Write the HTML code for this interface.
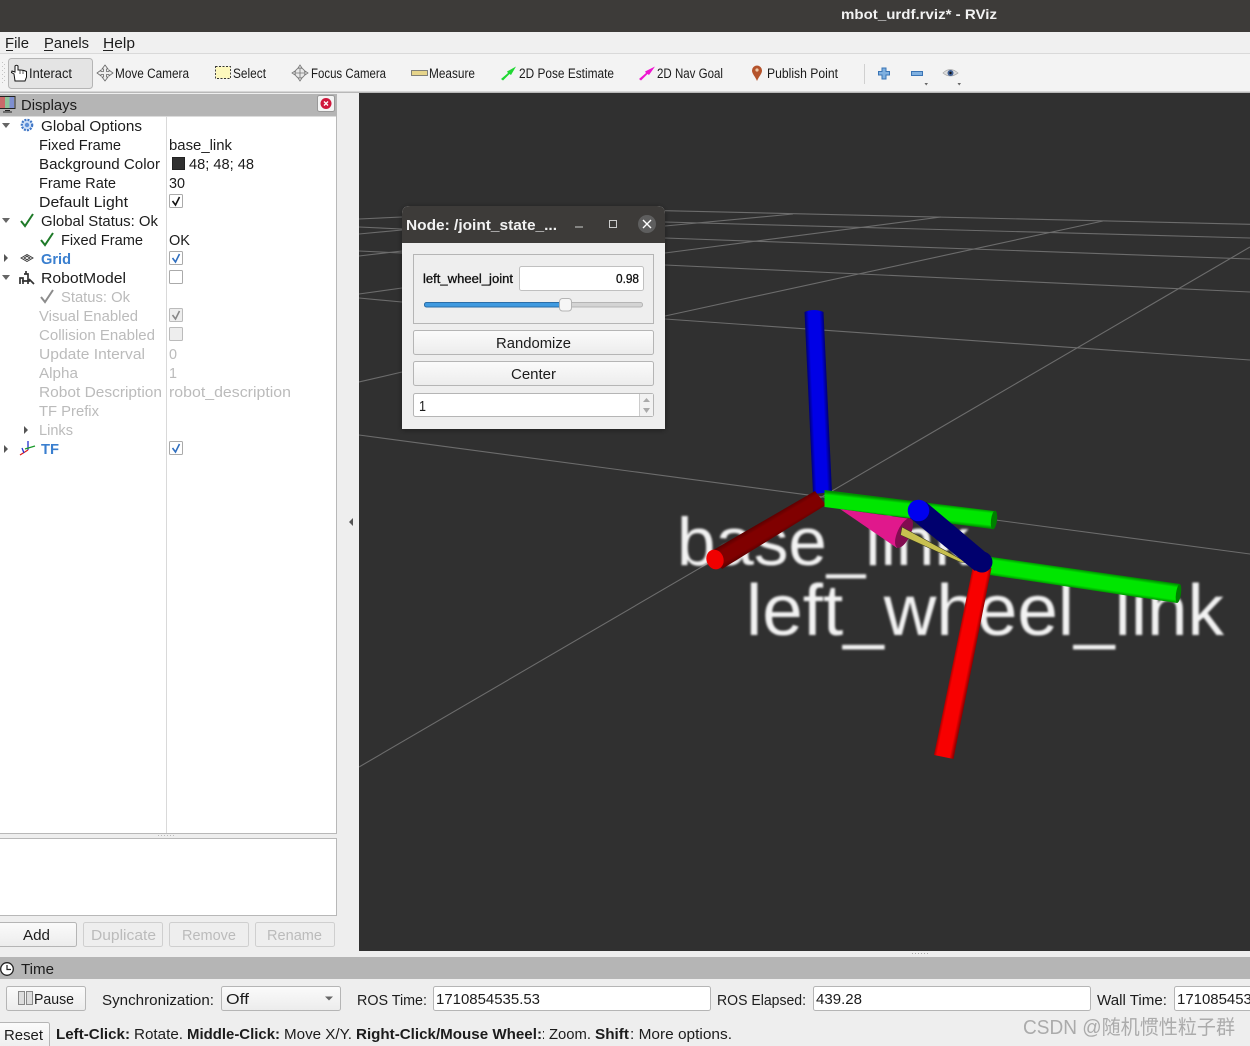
<!DOCTYPE html>
<html><head><meta charset="utf-8"><title>RViz</title>
<style>
html,body{margin:0;padding:0;background:#eee;width:1250px;height:1046px;overflow:hidden}
svg{display:block;font-family:"Liberation Sans","Noto Sans CJK SC",sans-serif}
text{font-size:15px;fill:#1c1c1c;white-space:pre}
.t{font-size:13.5px}
.d{fill:#bbb}
.b{font-weight:bold;fill:#3a7fcf}
.s{font-weight:bold}
.g line{stroke:#6c6c6c;stroke-width:1.1}
</style></head><body>
<svg xmlns="http://www.w3.org/2000/svg" width="1250" height="1046" viewBox="0 0 1250 1046">
<defs>
<linearGradient id="btn" x1="0" y1="0" x2="0" y2="1"><stop offset="0" stop-color="#fbfbfb"/><stop offset="1" stop-color="#ececec"/></linearGradient>
<linearGradient id="cb" gradientUnits="userSpaceOnUse" x1="809" y1="400.4" x2="827" y2="399.6"><stop offset="0" stop-color="#000080"/><stop offset=".2" stop-color="#0000e6"/><stop offset=".8" stop-color="#0000e6"/><stop offset="1" stop-color="#000080"/></linearGradient>
<linearGradient id="cr" gradientUnits="userSpaceOnUse" x1="952.2" y1="662" x2="971.8" y2="666"><stop offset="0" stop-color="#900000"/><stop offset=".18" stop-color="#f80000"/><stop offset=".82" stop-color="#f80000"/><stop offset="1" stop-color="#900000"/></linearGradient>
<linearGradient id="cg1" gradientUnits="userSpaceOnUse" x1="910" y1="501" x2="908" y2="519"><stop offset="0" stop-color="#008c00"/><stop offset=".18" stop-color="#00e600"/><stop offset=".82" stop-color="#00e600"/><stop offset="1" stop-color="#008c00"/></linearGradient>
<linearGradient id="cg2" gradientUnits="userSpaceOnUse" x1="1086.4" y1="570.6" x2="1083.6" y2="589.4"><stop offset="0" stop-color="#008c00"/><stop offset=".18" stop-color="#00e600"/><stop offset=".82" stop-color="#00e600"/><stop offset="1" stop-color="#008c00"/></linearGradient>
<linearGradient id="cd" gradientUnits="userSpaceOnUse" x1="762.4" y1="520.5" x2="773.6" y2="539.5"><stop offset="0" stop-color="#560000"/><stop offset=".25" stop-color="#800000"/><stop offset=".75" stop-color="#800000"/><stop offset="1" stop-color="#560000"/></linearGradient>
<filter id="bl" x="-5%" y="-10%" width="110%" height="120%"><feGaussianBlur stdDeviation="1"/></filter>
<filter id="sh" x="-10%" y="-10%" width="120%" height="120%"><feDropShadow dx="0" dy="1" stdDeviation="3" flood-color="#000" flood-opacity=".4"/></filter>
</defs>

<rect width="1250" height="1046" fill="#eeeeee"/>
<!-- title bar -->
<rect width="1250" height="32" fill="#3d3b39"/>
<text x="841" y="19" textLength="156" lengthAdjust="spacingAndGlyphs" style="font-weight:bold;fill:#f2f2f2;font-size:14px">mbot_urdf.rviz* - RViz</text>
<!-- menu -->
<rect y="32" width="1250" height="21" fill="#f0f0f0"/>
<rect y="53" width="1250" height="1" fill="#d9d9d9"/>
<text x="5" y="48" textLength="24" lengthAdjust="spacingAndGlyphs">File</text><rect x="6" y="50" width="7" height="1" fill="#222"/>
<text x="44" y="48" textLength="45" lengthAdjust="spacingAndGlyphs">Panels</text><rect x="44" y="50" width="9" height="1" fill="#222"/>
<text x="103" y="48" textLength="32" lengthAdjust="spacingAndGlyphs">Help</text><rect x="103" y="50" width="10" height="1" fill="#222"/>
<!-- toolbar -->
<rect y="54" width="1250" height="38" fill="#f3f3f3"/>
<rect y="91.5" width="1250" height="1.5" fill="#b8b8b8"/>
<g fill="#c4c4c4"><rect x="2" y="62" width="1" height="1"/><rect x="2" y="66" width="1" height="1"/><rect x="2" y="70" width="1" height="1"/><rect x="2" y="74" width="1" height="1"/><rect x="2" y="78" width="1" height="1"/><rect x="2" y="82" width="1" height="1"/><rect x="4" y="64" width="1" height="1"/><rect x="4" y="68" width="1" height="1"/><rect x="4" y="72" width="1" height="1"/><rect x="4" y="76" width="1" height="1"/><rect x="4" y="80" width="1" height="1"/></g>
<rect x="8.5" y="58.5" width="84" height="30" rx="3" fill="#e4e4e4" stroke="#b5b5b5"/>
<path d="M15 81 L14 74 L11.5 72.5 L12 71 L15 72 L15 66 Q16.5 64.5 18 66 L18 70 L21 70 L24 70.5 L26.5 71.5 L26.5 77 L25 81 Z" fill="#fff" stroke="#111" stroke-width="1"/>
<path d="M20 70.5 V74 M23 70.5 V74" stroke="#111" stroke-width=".7"/>
<text class="t" x="29" y="78" textLength="43" lengthAdjust="spacingAndGlyphs">Interact</text>
<g fill="#eee" stroke="#666" stroke-width=".8"><path d="M105 65 L108 69 L106.5 69 L106.5 71.5 L109 71.5 L109 70 L113 73 L109 76 L109 74.5 L106.5 74.5 L106.5 77 L108 77 L105 81 L102 77 L103.5 77 L103.5 74.5 L101 74.5 L101 76 L97 73 L101 70 L101 71.5 L103.5 71.5 L103.5 69 L102 69 Z"/></g>
<text class="t" x="115" y="78" textLength="74" lengthAdjust="spacingAndGlyphs">Move Camera</text>
<rect x="215.5" y="66.5" width="15" height="12" fill="#fdf8bd" stroke="#333" stroke-dasharray="2 1.5" stroke-width=".9"/>
<text class="t" x="233" y="78" textLength="33" lengthAdjust="spacingAndGlyphs">Select</text>
<g fill="#e8e8e8" stroke="#777" stroke-width=".8"><circle cx="300" cy="73" r="5"/><path d="M300 65 L302 68 L298 68 Z M300 81 L302 78 L298 78 Z M292 73 L295 71 L295 75 Z M308 73 L305 71 L305 75 Z"/><path d="M300 68 V78 M295 73 H305" fill="none"/></g>
<text class="t" x="311" y="78" textLength="75" lengthAdjust="spacingAndGlyphs">Focus Camera</text>
<rect x="411.5" y="70.5" width="16" height="5" fill="#e6d48a" stroke="#666" stroke-width=".8"/>
<text class="t" x="429" y="78" textLength="46" lengthAdjust="spacingAndGlyphs">Measure</text>
<path d="M501 79 L508 73 L507 71.5 L516 66.5 L511 75 L509.5 74 L503 80.5 Z" fill="#1fd832"/>
<text class="t" x="519" y="78" textLength="95" lengthAdjust="spacingAndGlyphs">2D Pose Estimate</text>
<path d="M639 79 L646 73 L645 71.5 L655 66.5 L649 75 L647.5 74 L641 80.5 Z" fill="#ee14d0"/>
<text class="t" x="657" y="78" textLength="66" lengthAdjust="spacingAndGlyphs">2D Nav Goal</text>
<path d="M757 81 C755 76 752 74 752 70.5 A5 5 0 0 1 762 70.5 C762 74 759 76 757 81 Z" fill="#b5532b"/><circle cx="757" cy="70" r="1.6" fill="#edc9a8"/>
<text class="t" x="767" y="78" textLength="71" lengthAdjust="spacingAndGlyphs">Publish Point</text>
<rect x="864" y="64" width="1" height="20" fill="#d0d0d0"/>
<path d="M882 68 H886 V71.5 H889.5 V75 H886 V79 H882 V75 H878.5 V71.5 H882 Z" fill="#7fb0e0" stroke="#3a74b5" stroke-width="1"/>
<rect x="911.5" y="71.5" width="11" height="4" fill="#7fb0e0" stroke="#3a74b5"/>
<path d="M928 83 H924.5 L926.2 85.5 Z M961 83 H957.5 L959.2 85.5 Z" fill="#666"/>
<path d="M943 73 Q950 66 958 73 Q950 79 943 73 Z" fill="#dcdcdc" stroke="#aaa" stroke-width=".8"/><circle cx="950.5" cy="73" r="3" fill="#3f5f93"/><circle cx="950.5" cy="73" r="1.2" fill="#111"/>

<!-- Displays panel -->
<rect x="0" y="94" width="337" height="22" fill="#b5b5b5"/>
<rect x="0" y="97" width="14" height="11" fill="#7f8fd0"/><rect x="0" y="97" width="5" height="11" fill="#c96a6a"/><rect x="5" y="97" width="4.5" height="11" fill="#8cc49a"/>
<path d="M0 96.5 H15 V108.5 H0 M5 110.5 H10 M3 112 H12" fill="none" stroke="#222" stroke-width="1"/>
<text x="21" y="110" textLength="56" lengthAdjust="spacingAndGlyphs">Displays</text>
<rect x="317.5" y="95.5" width="17" height="16" rx="2" fill="#f4f4f4" stroke="#999"/>
<circle cx="326" cy="103.5" r="5.5" fill="#d0173c"/><path d="M324 101.5 L328 105.5 M328 101.5 L324 105.5" stroke="#fff" stroke-width="1.3"/>
<rect x="-2" y="116" width="338.5" height="717.5" fill="#fff" stroke="#b8b8b8"/>
<rect x="166" y="116" width="1" height="717" fill="#d9d9d9"/>

<!-- expanders -->
<path d="M2 123 H10 L6 128 Z M2 218 H10 L6 223 Z M2 275 H10 L6 280 Z" fill="#666"/>
<path d="M4 254 L8 258 L4 262 Z M4 445 L8 449 L4 453 Z M24 426 L28 430 L24 434 Z" fill="#555"/>

<!-- tree icons -->
<circle cx="27" cy="125" r="5.2" fill="#cfe0f7" stroke="#3f76c6" stroke-width="2.2" stroke-dasharray="2 1.1"/><circle cx="27" cy="125" r="2.2" fill="#5d8fd8"/>
<path d="M21 221 L25 226 L33 214" fill="none" stroke="#1e7a28" stroke-width="2"/>
<path d="M41 240 L45 245 L53 233" fill="none" stroke="#1e7a28" stroke-width="2"/>
<path d="M41 297 L45 302 L53 290" fill="none" stroke="#8c8c8c" stroke-width="2"/>
<path d="M21 258 L27 254.5 L33 258 L27 261.5 Z M24 258 L27 256.3 L30 258 L27 259.7 Z" fill="none" stroke="#333" stroke-width=".9"/>
<path d="M20 284 V278 H23 V284 M24 274 H28 V284 M26 271 V274 M29 279 L34 284 M22 281 H30" fill="none" stroke="#333" stroke-width="1.7"/>
<path d="M28 450 L28 441" stroke="#2230d0" stroke-width="1.3"/><path d="M28 450 L20 455" stroke="#e01b1b" stroke-width="1.3"/><path d="M25 449 L35 446" stroke="#1a9a2a" stroke-width="1.3"/><path d="M22 448 L24 453" stroke="#2230d0" stroke-width="1.3"/>

<!-- tree text -->
<text x="41" y="131" textLength="101" lengthAdjust="spacingAndGlyphs">Global Options</text>
<text x="39" y="150" textLength="82" lengthAdjust="spacingAndGlyphs">Fixed Frame</text>
<text x="169" y="150" textLength="63" lengthAdjust="spacingAndGlyphs">base_link</text>
<text x="39" y="169" textLength="121" lengthAdjust="spacingAndGlyphs">Background Color</text>
<rect x="172.5" y="157.5" width="12" height="12" fill="#303030" stroke="#222"/>
<text x="189" y="169" textLength="65" lengthAdjust="spacingAndGlyphs">48; 48; 48</text>
<text x="39" y="188" textLength="77" lengthAdjust="spacingAndGlyphs">Frame Rate</text>
<text x="169" y="188" textLength="16" lengthAdjust="spacingAndGlyphs">30</text>
<text x="39" y="207" textLength="89" lengthAdjust="spacingAndGlyphs">Default Light</text>
<text x="41" y="226" textLength="117" lengthAdjust="spacingAndGlyphs">Global Status: Ok</text>
<text x="61" y="245" textLength="82" lengthAdjust="spacingAndGlyphs">Fixed Frame</text>
<text x="169" y="245" textLength="21" lengthAdjust="spacingAndGlyphs">OK</text>
<text class="b" x="41" y="264" textLength="30" lengthAdjust="spacingAndGlyphs">Grid</text>
<text x="41" y="283" textLength="85" lengthAdjust="spacingAndGlyphs">RobotModel</text>
<text class="d" x="61" y="302" textLength="69" lengthAdjust="spacingAndGlyphs">Status: Ok</text>
<text class="d" x="39" y="321" textLength="99" lengthAdjust="spacingAndGlyphs">Visual Enabled</text>
<text class="d" x="39" y="340" textLength="116" lengthAdjust="spacingAndGlyphs">Collision Enabled</text>
<text class="d" x="39" y="359" textLength="106" lengthAdjust="spacingAndGlyphs">Update Interval</text>
<text class="d" x="169" y="359" textLength="8" lengthAdjust="spacingAndGlyphs">0</text>
<text class="d" x="39" y="378" textLength="39" lengthAdjust="spacingAndGlyphs">Alpha</text>
<text class="d" x="169" y="378" textLength="8" lengthAdjust="spacingAndGlyphs">1</text>
<text class="d" x="39" y="397" textLength="123" lengthAdjust="spacingAndGlyphs">Robot Description</text>
<text class="d" x="169" y="397" textLength="122" lengthAdjust="spacingAndGlyphs">robot_description</text>
<text class="d" x="39" y="416" textLength="60" lengthAdjust="spacingAndGlyphs">TF Prefix</text>
<text class="d" x="39" y="435" textLength="34" lengthAdjust="spacingAndGlyphs">Links</text>
<text class="b" x="41" y="454" textLength="18" lengthAdjust="spacingAndGlyphs">TF</text>

<!-- checkboxes -->
<rect x="169.5" y="194.5" width="13" height="13" rx="1" fill="#fff" stroke="#aaa"/><path d="M172.5 201 L175.5 205 L179.5 197" fill="none" stroke="#111" stroke-width="1.6"/>
<rect x="169.5" y="251.5" width="13" height="13" rx="1" fill="#fff" stroke="#aaa"/><path d="M172.5 258 L175.5 262 L179.5 254" fill="none" stroke="#2f6fc0" stroke-width="1.6"/>
<rect x="169.5" y="270.5" width="13" height="13" rx="1" fill="#fff" stroke="#aaa"/>
<rect x="169.5" y="308.5" width="13" height="13" rx="1" fill="#eee" stroke="#bbb"/><path d="M172.5 315 L175.5 319 L179.5 311" fill="none" stroke="#888" stroke-width="1.6"/>
<rect x="169.5" y="327.5" width="13" height="13" rx="1" fill="#eee" stroke="#bbb"/>
<rect x="169.5" y="441.5" width="13" height="13" rx="1" fill="#fff" stroke="#aaa"/><path d="M172.5 448 L175.5 452 L179.5 444" fill="none" stroke="#2f6fc0" stroke-width="1.6"/>

<!-- splitter + description -->
<g fill="#bbb"><rect x="158" y="835" width="1" height="1"/><rect x="161" y="835" width="1" height="1"/><rect x="164" y="835" width="1" height="1"/><rect x="167" y="835" width="1" height="1"/><rect x="170" y="835" width="1" height="1"/><rect x="173" y="835" width="1" height="1"/></g>
<rect x="-1" y="838.5" width="337.5" height="77" fill="#fff" stroke="#b8b8b8"/>
<rect x="-3" y="922.5" width="79.5" height="24" rx="2" fill="url(#btn)" stroke="#b5b5b5"/>
<text x="23" y="940" textLength="27" lengthAdjust="spacingAndGlyphs">Add</text>
<rect x="83.5" y="922.5" width="79" height="24" rx="2" fill="#eee" stroke="#cfcfcf"/>
<text class="d" x="91" y="940" textLength="65" lengthAdjust="spacingAndGlyphs">Duplicate</text>
<rect x="169.5" y="922.5" width="79" height="24" rx="2" fill="#eee" stroke="#cfcfcf"/>
<text class="d" x="182" y="940" textLength="54" lengthAdjust="spacingAndGlyphs">Remove</text>
<rect x="255.5" y="922.5" width="79" height="24" rx="2" fill="#eee" stroke="#cfcfcf"/>
<text class="d" x="267" y="940" textLength="55" lengthAdjust="spacingAndGlyphs">Rename</text>
<path d="M353 518 V526 L349 522 Z" fill="#555"/>

<!-- 3D viewport -->
<svg x="359" y="93" width="891" height="858" viewBox="359 93 891 858">
<rect x="359" y="93" width="891" height="858" fill="#303030"/>
<g class="g">
<line x1="665" y1="210.7" x2="1250" y2="224.3"/>
<line x1="665" y1="222" x2="1250" y2="238"/>
<line x1="665" y1="238" x2="1250" y2="259"/>
<line x1="665" y1="265" x2="1250" y2="292"/>
<line x1="665" y1="319" x2="1250" y2="360"/>
<line x1="359" y1="435" x2="1250" y2="554"/>
<line x1="665" y1="226" x2="793" y2="214"/>
<line x1="665" y1="253" x2="941" y2="217"/>
<line x1="665" y1="316" x2="1103" y2="221"/>
<line x1="359" y1="767" x2="1250" y2="247"/>
<line x1="359" y1="219" x2="402" y2="217"/>
<line x1="359" y1="227" x2="402" y2="229"/>
<line x1="359" y1="234" x2="402" y2="230"/>
<line x1="359" y1="251" x2="402" y2="253"/>
<line x1="359" y1="256" x2="402" y2="251"/>
<line x1="359" y1="294" x2="402" y2="288"/>
<line x1="359" y1="298" x2="402" y2="302"/>
<line x1="359" y1="382" x2="402" y2="372"/>
</g>
<g filter="url(#bl)" style="font-family:'Liberation Sans',sans-serif">
<text x="677" y="565" textLength="292" lengthAdjust="spacingAndGlyphs" style="font-size:68px;fill:#f2f2f2">base_link</text>
<text x="746" y="635" textLength="478" lengthAdjust="spacingAndGlyphs" style="font-size:72px;fill:#f2f2f2">left_wheel_link</text>
</g>
<!-- blue Z axis 1 -->
<path d="M804.5 312 Q814 308 823.5 312 L832 492 L813 494 Z" fill="url(#cb)"/>
<!-- dark red X axis 1 -->
<path d="M708 553 L815 491 L826 505 L722 569 Z" fill="url(#cd)"/>
<ellipse cx="715" cy="559.5" rx="8.5" ry="10" fill="#f00000" transform="rotate(-20 715 559.5)"/>
<!-- pink cone -->
<path d="M840 509 L911 519 L897 548 Z" fill="#e0188c"/>
<ellipse cx="904" cy="533" rx="6.5" ry="16" fill="#820c50" transform="rotate(25 904 533)"/>
<!-- green Y axis 1 -->
<path d="M824.5 490 L994 511 L992 529 L824.5 507 Z" fill="url(#cg1)"/>
<ellipse cx="994" cy="520" rx="3" ry="9.5" fill="#007f00" transform="rotate(7 994 520)"/>
<!-- yellow arrow -->
<path d="M902 527 L968 563 L960 562 L900.5 535 Z" fill="#c8c050" stroke="#3a3a20" stroke-width=".6"/>
<!-- green Y axis 2 -->
<path d="M985 556 L1180 584 L1177 603 L983 574 Z" fill="url(#cg2)"/>
<ellipse cx="1178.5" cy="593.5" rx="2.5" ry="9.5" fill="#007f00" transform="rotate(8 1178.5 593.5)"/>
<!-- red X axis 2 -->
<path d="M973 566 L991.5 568 L953.5 759 L934 755 Z" fill="url(#cr)"/>
<!-- navy cylinder -->
<path d="M926 502 L990 556 L975 571 L910 518 Z" fill="#00006e"/>
<circle cx="982" cy="562" r="10.5" fill="#00006e"/>
<circle cx="918.5" cy="510.5" r="10.8" fill="#0000f0"/>
</svg>

<!-- popup -->
<path d="M402 214 Q402 206 410 206 H657 Q665 206 665 214 V429 H402 Z" fill="#eeeeee" filter="url(#sh)"/>
<path d="M402 214 Q402 206 410 206 H657 Q665 206 665 214 V243 H402 Z" fill="#3d3b39"/>
<text x="406" y="230" textLength="151" lengthAdjust="spacingAndGlyphs" style="font-weight:bold;fill:#f2f2f2;font-size:15px">Node: /joint_state_...</text>
<rect x="575" y="226.5" width="8" height="1" fill="#ccc"/>
<rect x="609.5" y="220.5" width="7" height="7" fill="none" stroke="#ccc"/>
<circle cx="647" cy="224" r="9" fill="#5e5e5e"/><path d="M643 220 L651 228 M651 220 L643 228" stroke="#fff" stroke-width="1.4"/>
<rect x="413.5" y="254.5" width="240" height="69" fill="none" stroke="#b5b5b5"/>
<text x="423" y="283" textLength="90" lengthAdjust="spacingAndGlyphs" style="font-size:12.5px;fill:#111;stroke:#111;stroke-width:.3">left_wheel_joint</text>
<rect x="519.5" y="266.5" width="124" height="24" rx="2" fill="#fff" stroke="#c0c0c0"/>
<text x="616" y="283" textLength="23" lengthAdjust="spacingAndGlyphs" style="font-size:12.5px;fill:#111;stroke:#111;stroke-width:.3">0.98</text>
<rect x="424.5" y="302.5" width="218" height="4.5" rx="2" fill="#d4d4d4" stroke="#b5b5b5"/>
<rect x="424.5" y="302.5" width="141" height="4.5" rx="2" fill="#3f9ae0" stroke="#2a6ea8"/>
<rect x="559.5" y="298.5" width="12" height="12.5" rx="3" fill="#f6f6f6" stroke="#b5b5b5"/>
<rect x="413.5" y="330.5" width="240" height="24" rx="2" fill="url(#btn)" stroke="#b5b5b5"/>
<text x="496" y="348" textLength="75" lengthAdjust="spacingAndGlyphs">Randomize</text>
<rect x="413.5" y="361.5" width="240" height="24" rx="2" fill="url(#btn)" stroke="#b5b5b5"/>
<text x="511" y="379" textLength="45" lengthAdjust="spacingAndGlyphs">Center</text>
<rect x="413.5" y="393.5" width="240" height="23" rx="2" fill="#fff" stroke="#b5b5b5"/>
<rect x="639.5" y="394" width="13.5" height="22" fill="#f2f2f2"/><rect x="639" y="394" width="1" height="22" fill="#ccc"/>
<path d="M643 402 H650 L646.5 398 Z M643 408 H650 L646.5 413 Z" fill="#aaa"/>
<text x="419" y="411" textLength="7" lengthAdjust="spacingAndGlyphs">1</text>

<!-- Time panel -->
<g fill="#aaa"><rect x="912" y="953" width="1" height="1"/><rect x="915" y="953" width="1" height="1"/><rect x="918" y="953" width="1" height="1"/><rect x="921" y="953" width="1" height="1"/><rect x="924" y="953" width="1" height="1"/><rect x="927" y="953" width="1" height="1"/></g>
<rect y="957" width="1250" height="22" fill="#b5b5b5"/>
<circle cx="7" cy="969" r="6.3" fill="#fff" stroke="#222" stroke-width="1.3"/><path d="M7 965 V969.5 H11" fill="none" stroke="#222" stroke-width="1.2"/>
<text x="21" y="974" textLength="33" lengthAdjust="spacingAndGlyphs">Time</text>

<rect x="6.5" y="986.5" width="79" height="24" rx="2" fill="url(#btn)" stroke="#b5b5b5"/>
<rect x="18.5" y="991.5" width="6" height="13" fill="#ddd" stroke="#888"/><rect x="26.5" y="991.5" width="6" height="13" fill="#ddd" stroke="#888"/>
<text x="34" y="1004" textLength="40" lengthAdjust="spacingAndGlyphs">Pause</text>
<text x="102" y="1005" textLength="112" lengthAdjust="spacingAndGlyphs">Synchronization:</text>
<rect x="221.5" y="986.5" width="119" height="24" rx="2" fill="url(#btn)" stroke="#b5b5b5"/>
<text x="226" y="1004" textLength="23" lengthAdjust="spacingAndGlyphs">Off</text>
<path d="M325 996.5 H333 L329 1000.5 Z" fill="#666"/>
<text x="357" y="1005" textLength="70" lengthAdjust="spacingAndGlyphs">ROS Time:</text>
<rect x="433.5" y="986.5" width="277" height="24" rx="2" fill="#fff" stroke="#b5b5b5"/>
<text x="436" y="1004" textLength="104" lengthAdjust="spacingAndGlyphs">1710854535.53</text>
<text x="717" y="1005" textLength="89" lengthAdjust="spacingAndGlyphs">ROS Elapsed:</text>
<rect x="813.5" y="986.5" width="277" height="24" rx="2" fill="#fff" stroke="#b5b5b5"/>
<text x="816" y="1004" textLength="46" lengthAdjust="spacingAndGlyphs">439.28</text>
<text x="1097" y="1005" textLength="70" lengthAdjust="spacingAndGlyphs">Wall Time:</text>
<rect x="1174.5" y="986.5" width="90" height="24" rx="2" fill="#fff" stroke="#b5b5b5"/>
<text x="1177" y="1004" textLength="104" lengthAdjust="spacingAndGlyphs">1710854535.53</text>

<!-- status bar -->
<rect x="-3" y="1022.5" width="52.5" height="30" rx="2" fill="url(#btn)" stroke="#b5b5b5"/>
<text x="4" y="1040" textLength="39" lengthAdjust="spacingAndGlyphs">Reset</text>
<text class="s" x="56" y="1039" textLength="74" lengthAdjust="spacingAndGlyphs">Left-Click:</text>
<text x="134" y="1039" textLength="49" lengthAdjust="spacingAndGlyphs">Rotate.</text>
<text class="s" x="187" y="1039" textLength="93" lengthAdjust="spacingAndGlyphs">Middle-Click:</text>
<text x="284" y="1039" textLength="68" lengthAdjust="spacingAndGlyphs">Move X/Y.</text>
<text class="s" x="356" y="1039" textLength="186" lengthAdjust="spacingAndGlyphs">Right-Click/Mouse Wheel:</text>
<text x="542" y="1039" textLength="3" lengthAdjust="spacingAndGlyphs">:</text>
<text x="549" y="1039" textLength="42" lengthAdjust="spacingAndGlyphs">Zoom.</text>
<text class="s" x="595" y="1039" textLength="34" lengthAdjust="spacingAndGlyphs">Shift</text>
<text x="630" y="1039" textLength="102" lengthAdjust="spacingAndGlyphs">: More options.</text>
<text x="1023" y="1034" textLength="212" lengthAdjust="spacingAndGlyphs" style="font-size:20px;fill:#ababab;font-family:'Liberation Sans','Noto Sans CJK SC',sans-serif">CSDN @随机惯性粒子群</text>
</svg>
</body></html>
